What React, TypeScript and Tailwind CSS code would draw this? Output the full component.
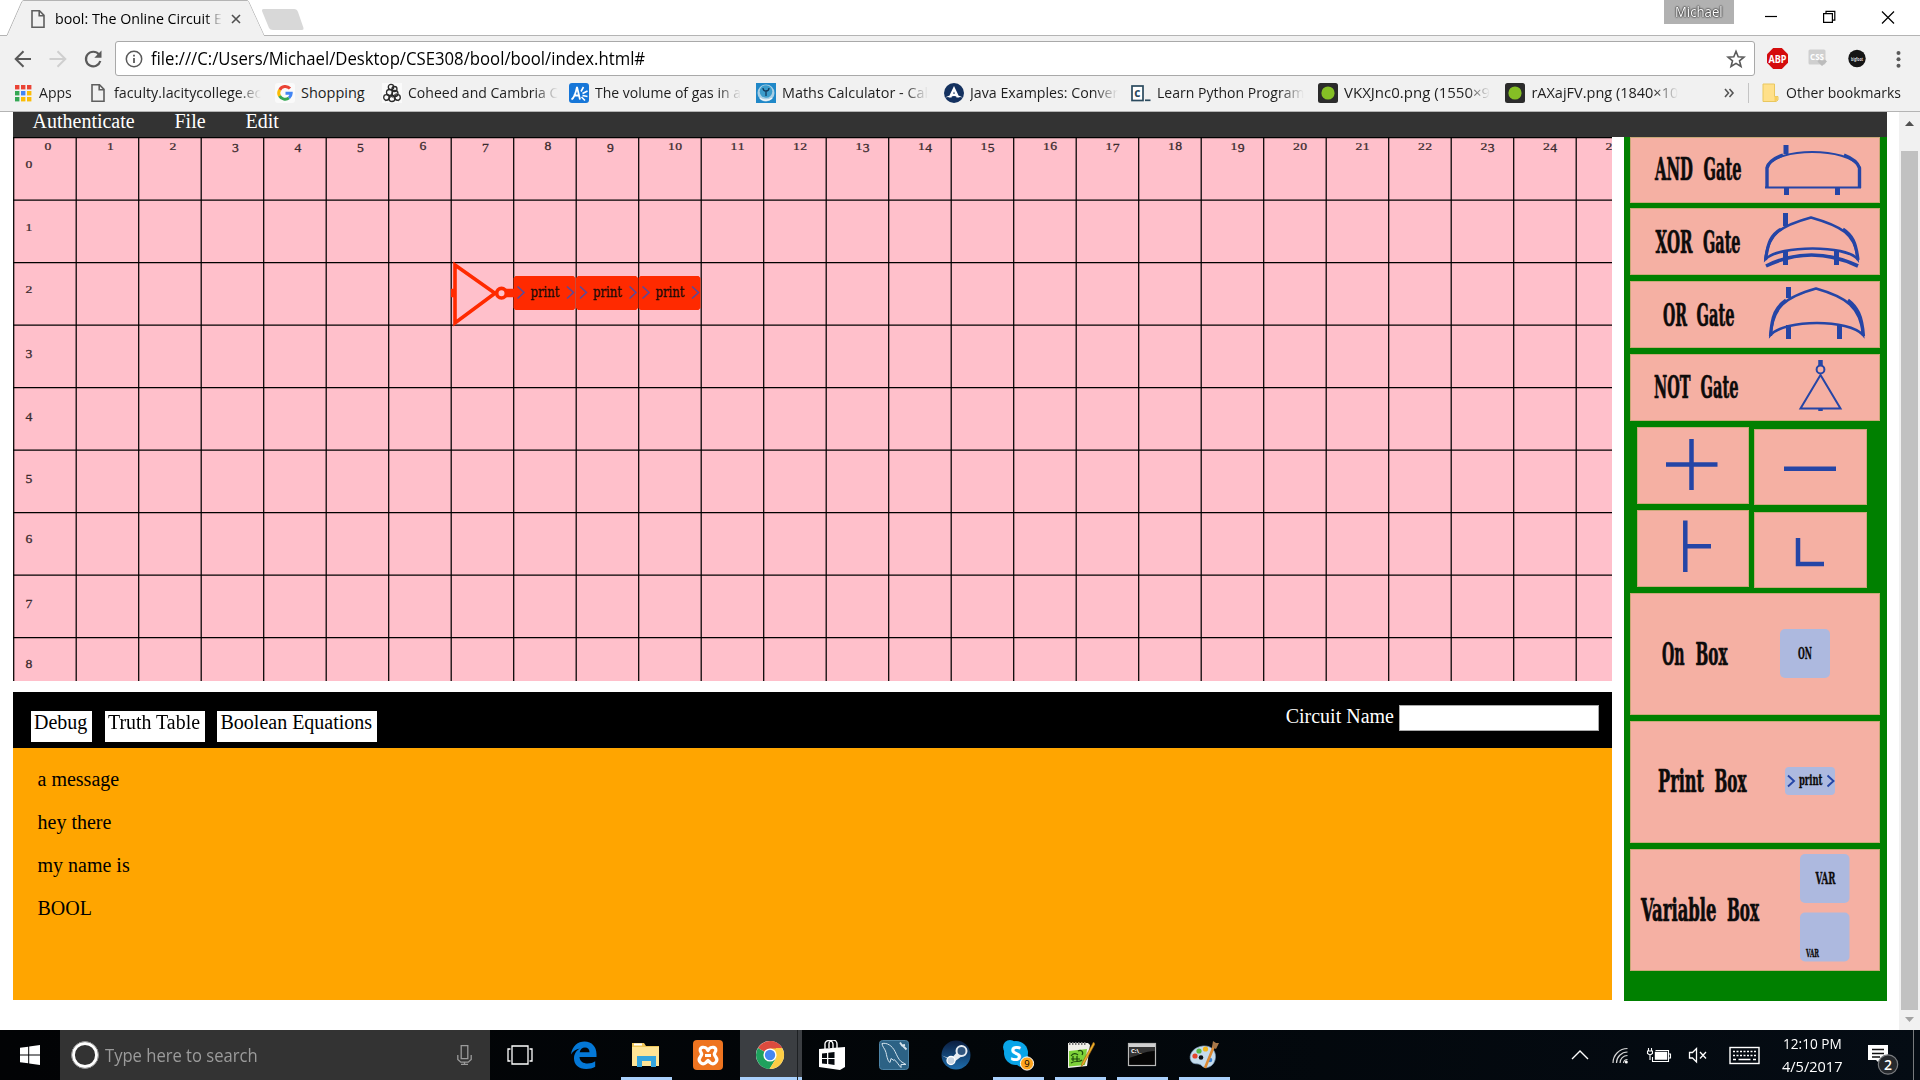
import { useLayoutEffect, useRef, useState, type ReactNode } from "react";

/* Text squeezed or stretched horizontally to an exact width. */
function Fit({ w, className = "", children }: { w: number; className?: string; children: ReactNode }) {
  const ref = useRef<HTMLSpanElement>(null);
  const [s, setS] = useState(1);
  useLayoutEffect(() => {
    if (ref.current) setS(w / ref.current.offsetWidth);
  }, [w]);
  return (
    <span className={`block shrink-0 whitespace-pre ${className}`} style={{ width: w }}>
      <span ref={ref} className="inline-block origin-left" style={{ transform: `scaleX(${s})` }}>
        {children}
      </span>
    </span>
  );
}

const PageIcon = () => (
  <svg width="20" height="20" viewBox="0 0 20 20" fill="none" stroke="#5f5f5f" strokeWidth="1.6">
    <path d="M4 1.8h7.5l4.500 4.600V18.200H4z M11.200 2v4.700h4.600" />
  </svg>
);

/* ---------- browser chrome ---------- */
function TitleBar() {
  return (
    <div className="flex h-9 items-start bg-white">
      <div className="relative h-9 w-[310px]">
        <svg className="absolute inset-0" width="310" height="36">
          <path d="M0 35.5H7L22 1.5Q23 .5 24 .5H247Q248 .5 248.500 1.500L264 35.500H310" fill="none" stroke="#b4b4b4" />
          <path d="M7.500 36L22.500 1.500Q23 1 24 1H247Q248 1 248.500 2L264 36z" fill="#f1f1f1" />
          <path d="M263.500 9H294Q297 9 298 12L303.500 28Q304 30 302 30H273Q270 30 269 28L262 11Q261.500 9 263.500 9z" fill="#d8d8d8" />
        </svg>
        <div className="relative flex h-9 items-center pl-[28px] pt-0.5">
          <PageIcon />
          <div className="ml-[7px] w-[167px] overflow-hidden text-[14.5px] [mask-image:linear-gradient(to_right,black_90%,transparent_100%)]">
            <Fit w={167}>bool: The Online Circuit E</Fit>
          </div>
          <svg className="ml-[9px]" width="10" height="10" stroke="#505050" strokeWidth="1.6">
            <path d="M1 1l8 8M9 1l-8 8" />
          </svg>
        </div>
      </div>
      <div className="flex h-9 grow justify-end border-b border-[#b4b4b4]">
        <div className="mr-[31px] flex h-6 w-[70px] items-center justify-center bg-[#b1b1b1] pb-0.5 text-[14px] text-white [text-shadow:0_0_2px_#222,0_0_1px_#222,0_0_2px_#444]">
          <Fit w={48}>Michael</Fit>
        </div>
        <svg width="155" height="34" fill="none" stroke="#000" strokeWidth="1.2">
          <path d="M0 16.500h12" />
          <path d="M58.600 13.600h8.800v8.800h-8.800zM61 13.500v-2.200h8.800v8.800h-2.300" />
          <path d="M117 11.500l12 12M129 11.500l-12 12" />
        </svg>
      </div>
    </div>
  );
}

function Toolbar() {
  return (
    <div className="flex h-10 items-start bg-[#f1f1f1] pt-[5px]">
      <svg width="115" height="35" fill="none" strokeWidth="2">
        <path d="M31 18H16M23.500 10.200L15.700 18l7.800 7.800" stroke="#5a5a5a" />
        <path d="M49.500 18H65M57.500 10.200L65.300 18l-7.800 7.800" stroke="#cfcfcf" />
        <path d="M99 13.500A7.300 7.300 0 1 0 100.300 20" stroke="#5a5a5a" strokeWidth="2.200" />
        <path d="M101.500 9.500v7.200h-7.200z" fill="#5a5a5a" />
      </svg>
      <div className="flex h-[35px] w-[1640px] items-center rounded-[3px] border border-[#a9a9a9] bg-white">
        <svg className="ml-[9px]" width="18" height="18" fill="none" stroke="#5a5a5a" strokeWidth="1.500">
          <circle cx="9" cy="9" r="7.700" />
          <path d="M9 8v5M9 4.800v1.700" strokeWidth="1.800" />
        </svg>
        <Fit w={494} className="ml-2 grow pb-px text-[17.500px] leading-[32px] text-black">
          file:///C:/Users/Michael/Desktop/CSE308/bool/bool/index.html#
        </Fit>
        <svg className="ml-auto mr-2" width="20" height="20" viewBox="0 0 20 20" fill="none" stroke="#5a5a5a" strokeWidth="1.600">
          <path d="M10 2.300l2.200 5.400 5.800.4-4.500 3.700 1.500 5.700-5-3.100-5 3.100 1.500-5.700L2 8.100l5.800-.4z" />
        </svg>
      </div>
      <svg width="160" height="35">
        <path d="M18.200 7h8.600l6.200 6.200v8.600L26.800 28h-8.600L12 21.800v-8.600z" fill="#d40c0c" />
        <text x="13.500" y="21.500" textLength="18" lengthAdjust="spacingAndGlyphs" fontSize="10.500" fontWeight="700" fill="#fff">ABP</text>
        <rect x="53.500" y="8.500" width="17" height="15" rx="1.500" fill="#cfcfcf" />
        <text x="55" y="19" textLength="14" lengthAdjust="spacingAndGlyphs" fontSize="8.500" fontWeight="700" fill="#fff">CSS</text>
        <path d="M67 25l-4.500-4.500 1.500-2 3 1.500 3-1.500 2 2z" fill="#bcbcbc" />
        <circle cx="102" cy="17.500" r="8.700" fill="#151515" />
        <text x="96" y="19.800" textLength="12" lengthAdjust="spacingAndGlyphs" fontSize="5.500" fontWeight="700" fill="#ddd">bigfoot</text>
        <g fill="#5a5a5a">
          <circle cx="143.500" cy="12" r="2" />
          <circle cx="143.500" cy="18.300" r="2" />
          <circle cx="143.500" cy="24.700" r="2" />
        </g>
      </svg>
    </div>
  );
}

const appColors = ["#ea4335", "#ea4335", "#ea4335", "#34a853", "#4285f4", "#fbbc05", "#34a853", "#fbbc05", "#fbbc05"];
const AppsIcon = () => (
  <svg width="20" height="20">
    {appColors.map((c, i) => (
      <rect key={i} x={2 + (i % 3) * 6} y={2 + Math.floor(i / 3) * 6} width="4.400" height="4.400" fill={c} />
    ))}
  </svg>
);
const GoogleIcon = () => (
  <svg width="20" height="20" fill="none" strokeWidth="3">
    <rect width="20" height="20" rx="3" fill="#fafafa" />
    <path d="M15 5.600A6.300 6.300 0 0 0 4.700 7" stroke="#ea4335" />
    <path d="M4.700 6.700A6.300 6.300 0 0 0 4.700 13.300" stroke="#fbbc05" />
    <path d="M4.600 13A6.300 6.300 0 0 0 14 14.900" stroke="#34a853" />
    <path d="M14 14.900A6.300 6.300 0 0 0 16.200 10.200H10.500" stroke="#4285f4" />
  </svg>
);
const CoheedIcon = () => (
  <svg width="20" height="20" fill="none" stroke="#2b2b2b" strokeWidth="1.300">
    <rect width="20" height="20" fill="#fafafa" stroke="none" />
    <circle cx="9" cy="4" r="2.700" />
    <circle cx="12.500" cy="6" r="2.500" />
    <circle cx="7.500" cy="9.500" r="3" />
    <circle cx="13" cy="10.500" r="3" />
    <circle cx="4.500" cy="14.500" r="2.800" />
    <circle cx="10" cy="15.500" r="3" />
    <circle cx="15.500" cy="14.500" r="2.800" />
    <path d="M3 18l12-8M17 18L5 11" strokeWidth=".7" />
  </svg>
);
const AnswersIcon = () => (
  <svg width="20" height="20">
    <rect width="20" height="20" rx="3" fill="#1676d8" />
    <path d="M2.500 16.500C5 15 7 9 8 4l3 12.500M4.500 12.500h5.500" fill="none" stroke="#fff" strokeWidth="1.800" />
    <path d="M12 8.500l2.500-4.500M13.500 10.500l5-2.500M13.500 12.500l5 1M12.500 14l3.500 3.500" stroke="#fff" strokeWidth="1.600" />
  </svg>
);
const MathsIcon = () => (
  <svg width="20" height="20">
    <rect width="20" height="20" fill="#2088c8" />
    <circle cx="10" cy="10" r="8.500" fill="#a9cfe4" />
    <circle cx="10" cy="8.500" r="6.300" fill="#3b9ccb" />
    <path d="M7 5c0 4 6 4 6 0M10 8v5" fill="none" stroke="#123a5c" strokeWidth="1.300" />
    <path d="M4 15c3 3 9 3 12 0" fill="none" stroke="#eef6fa" strokeWidth="1.500" />
  </svg>
);
const JavaIcon = () => (
  <svg width="20" height="20">
    <circle cx="10" cy="10" r="10" fill="#14315f" />
    <path d="M10 3l5.500 11.500h-3L10 8.500l-2.500 6h-3zM1 14.500l9-4 9 4-9-1.500z" fill="#fff" />
  </svg>
);
const CodeIcon = () => (
  <svg width="20" height="20">
    <rect x="1" y="3" width="11" height="14.500" fill="#fff" stroke="#2b4a5e" strokeWidth="1.700" />
    <text x="3.300" y="14" fontSize="12" fontWeight="700" fill="#2b4a5e">c</text>
    <path d="M14 17.300h5.500" stroke="#2b4a5e" strokeWidth="1.700" />
  </svg>
);
const ImgurIcon = () => (
  <svg width="20" height="20">
    <rect width="20" height="20" rx="2.500" fill="#2b2b2b" />
    <circle cx="10" cy="10" r="6.600" fill="#85bf25" />
  </svg>
);

const bookmarks: { icon: ReactNode; text: string; w: number; box: string; fade: boolean }[] = [
  { icon: <AppsIcon />, text: "Apps", w: 33, box: "w-[75px]", fade: false },
  { icon: <PageIcon />, text: "faculty.lacitycollege.ec", w: 147, box: "w-[187px]", fade: true },
  { icon: <GoogleIcon />, text: "Shopping", w: 64, box: "w-[106.500px]", fade: false },
  { icon: <CoheedIcon />, text: "Coheed and Cambria C", w: 150, box: "w-[187px]", fade: true },
  { icon: <AnswersIcon />, text: "The volume of gas in a", w: 146, box: "w-[187.500px]", fade: true },
  { icon: <MathsIcon />, text: "Maths Calculator - Cal", w: 146, box: "w-[187.500px]", fade: true },
  { icon: <JavaIcon />, text: "Java Examples: Conver", w: 148, box: "w-[187.300px]", fade: true },
  { icon: <CodeIcon />, text: "Learn Python Program", w: 147, box: "w-[187.300px]", fade: true },
  { icon: <ImgurIcon />, text: "VKXJnc0.png (1550×9", w: 146, box: "w-[187.300px]", fade: true },
  { icon: <ImgurIcon />, text: "rAXajFV.png (1840×10", w: 147, box: "w-[187.500px]", fade: true },
];

function BookmarksBar() {
  return (
    <div className="flex h-9 items-center border-b border-[#b4b4b4] bg-[#f1f1f1] pb-px pl-[13px] text-[14.500px] text-[#1e1e1e]">
      {bookmarks.map((b, i) => (
        <div key={i} className={`flex shrink-0 items-center gap-1.5 ${b.box}`}>
          {b.icon}
          <div className={b.fade ? "pb-px [mask-image:linear-gradient(to_right,black_84%,transparent_100%)]" : "pb-px"}>
            <Fit w={b.w}>{b.text}</Fit>
          </div>
        </div>
      ))}
      <svg className="ml-[31px]" width="12" height="10" fill="none" stroke="#555" strokeWidth="1.600">
        <path d="M1 1l3.500 4L1 9M5.500 1L9 5 5.500 9" />
      </svg>
      <div className="ml-3 h-5 w-px bg-[#c4c4c4]" />
      <svg className="ml-[11px]" width="20" height="20">
        <path d="M3 1h11.500v12.500H18V17l-2 1.500H3z" fill="#ffe08a" stroke="#e9c75f" />
        <path d="M14.500 13.500H17v3l-1 1.500h-1.500z" fill="#f7ce5e" />
      </svg>
      <Fit w={115} className="ml-1.5 pb-px">Other bookmarks</Fit>
    </div>
  );
}

/* ---------- circuit canvas ---------- */
const CELL = 62.5;

/* Old-style numerals: 0-2 at x-height, 3/4/5/7/9 descending. */
function GridNumber({ cx, y, n }: { cx: number; y: number; n: number }) {
  const digits = String(n).split("");
  const start = cx - (digits.length - 1) * 3.6;
  return (
    <>
      {digits.map((d, i) => {
        const low = "012".includes(d);
        const dy = "34579".includes(d) ? 2.5 : 0;
        return (
          <text key={i} textAnchor="middle" fontSize="13" transform={`translate(${start + i * 7.2} ${y + dy}) scale(1.05 ${low ? 0.74 : 1})`}>
            {d}
          </text>
        );
      })}
    </>
  );
}

function PrintBlock({ x }: { x: number }) {
  return (
    <g transform={`translate(${x} 139)`}>
      <path d="M2 0h58l2 2v30l-2 2H2l-2-2V2z" fill="#ff2a00" />
      <path d="M4 10.500l6.500 6-6.500 6M53.500 10.500l6.500 6-6.500 6" fill="none" stroke="#5a4a9a" strokeWidth="1.600" />
      <text x="17" y="20.500" textLength="29" lengthAdjust="spacingAndGlyphs" fontSize="15.500" fill="#1a0a08" stroke="#1a0a08" strokeWidth=".3">print</text>
    </g>
  );
}

function CircuitCanvas() {
  return (
    <svg width="1599" height="544" className="block bg-[#ffc0cb] [font-family:'DejaVu_Serif_Condensed','DejaVu_Serif',serif]">
      <g stroke="#000" strokeWidth="1.250">
        {Array.from({ length: 26 }, (_, i) => (
          <path key={i} d={`M${0.7 + i * CELL} 0V544`} />
        ))}
        {Array.from({ length: 9 }, (_, i) => (
          <path key={i} d={`M0 ${0.7 + i * CELL}H1599`} />
        ))}
      </g>
      <g fill="#3a2a2d" className="[font-family:'Liberation_Serif',serif]" stroke="#3a2a2d" strokeWidth=".3">
        {Array.from({ length: 26 }, (_, i) => (
          <GridNumber key={i} cx={35 + i * CELL + (i > 9 ? 2 : 0)} y={12.600} n={i} />
        ))}
        {Array.from({ length: 9 }, (_, i) => (
          <GridNumber key={i} cx={16} y={31 + i * CELL} n={i} />
        ))}
      </g>
      <g stroke="#ff2a00" fill="none" strokeWidth="3.600">
        <path d="M442 128V186L482 156.300z" />
        <circle cx="488.500" cy="156.200" r="4.800" fill="#ffc0cb" />
        <path d="M493 156H501M438 156H442" strokeWidth="8.500" />
      </g>
      <PrintBlock x={500.5} />
      <PrintBlock x={563} />
      <PrintBlock x={625.5} />
    </svg>
  );
}

/* ---------- console ---------- */
function Console() {
  return (
    <div className="mt-[11px] text-[20px] leading-[23px]">
      <div className="flex h-14 items-start bg-black pl-[18px] text-black">
        <div className="mt-[19px] h-[31px] w-[61px] bg-white pl-[3px]">Debug</div>
        <div className="ml-[13px] mt-[19px] h-[31px] w-[100px] bg-white pl-[2.500px]"><Fit w={92.5}>Truth Table</Fit></div>
        <div className="ml-3 mt-[19px] h-[31px] w-[160px] bg-white pl-[3.500px]"><Fit w={152}>Boolean Equations</Fit></div>
        <div className="ml-auto mr-[13px] mt-[13px] flex items-start">
          <span className="mr-[5px] text-white">Circuit Name</span>
          <div className="h-[26px] w-[200px] border border-[#a9a9a9] bg-white" />
        </div>
      </div>
      <div className="flex h-[252px] flex-col gap-5 bg-[#ffa500] pl-[24.500px] pt-5 text-black">
        <p>a message</p>
        <p>hey there</p>
        <p>my name is</p>
        <p>BOOL</p>
      </div>
    </div>
  );
}

/* ---------- component palette ---------- */
const BLUE = "#2545a6";
const card = "flex bg-[#f5b0a3] outline outline-1 -outline-offset-1 outline-[#c9a878]";

/* A condensed slab-serif word whose advance is scaled to w. */
function CardLabel({ x, y, w, size = 31, children }: { x: number; y: number; w: number; size?: number; children: string }) {
  const ref = useRef<SVGTextElement>(null);
  const [s, setS] = useState(0.55);
  useLayoutEffect(() => {
    if (ref.current) setS(w / ref.current.getComputedTextLength());
  }, [w]);
  return (
    <text ref={ref} transform={`translate(${x} ${y}) scale(${s} 1)`} fontSize={size} fontWeight="700" fill="#0d0b0b" stroke="#0d0b0b" strokeWidth={size > 20 ? 0.7 : 0.3}>
      {children}
    </text>
  );
}

function Palette() {
  return (
    <div className="flex h-[864px] w-[263px] flex-col bg-[#008000] px-1.5 [font-family:'DejaVu_Serif_Condensed','DejaVu_Serif',serif]">
      <div className={`${card} h-[66px] w-[250px]`}>
        <svg width="250" height="66">
          <CardLabel x={25} y={43} w={38}>AND</CardLabel>
          <CardLabel x={73.500} y={43} w={38}>Gate</CardLabel>
          <g fill="none" stroke={BLUE}>
            <path d="M137 50V30C146 10 218 10 229.500 30V50" strokeWidth="2" />
            <path d="M137 51V31Q139 23 153 18M229.500 51V31Q227 23 214 18" strokeWidth="3.400" />
            <path d="M135 50.500H231" strokeWidth="2" />
            <path d="M156 8V17M156.500 50V58M207.500 50V58" strokeWidth="5" />
          </g>
        </svg>
      </div>
      <div className={`${card} mt-[5px] h-[67px] w-[250px]`}>
        <svg width="250" height="67">
          <CardLabel x={25.500} y={45} w={37}>XOR</CardLabel>
          <CardLabel x={73} y={45} w={37.500}>Gate</CardLabel>
          <g fill="none" stroke={BLUE}>
            <path d="M135.500 51C138 26 150 18 181 9.500C211 18 226 26 227.500 51C216 37 150 37 135.500 51z" strokeWidth="2.600" />
            <path d="M135.500 52C138 34 141 27 151 21M228 52C226 34 222 27 213 21" strokeWidth="3.200" />
            <path d="M136 58Q181 36 228 58" strokeWidth="3.600" />
            <path d="M155.500 5V18M155.500 42V57M206.500 42V57" strokeWidth="5" />
          </g>
        </svg>
      </div>
      <div className={`${card} mt-1.5 h-[67px] w-[250px]`}>
        <svg width="250" height="67">
          <CardLabel x={33} y={45} w={24}>OR</CardLabel>
          <CardLabel x={66.500} y={45} w={38}>Gate</CardLabel>
          <g fill="none" stroke={BLUE}>
            <path d="M140.500 54C143 26 155 16 186 7.500C216 16 231 26 233 54C219 38 155 38 140.500 54z" strokeWidth="2.600" />
            <path d="M140.500 55C142 34 146 26 156 19M233.500 55C232 34 227 26 218 19" strokeWidth="3.200" />
            <path d="M158.500 6V17M158.500 44V58M209.500 44V58" strokeWidth="5" />
          </g>
        </svg>
      </div>
      <div className={`${card} mt-1.5 h-[67px] w-[250px]`}>
        <svg width="250" height="67">
          <CardLabel x={24} y={44} w={36.500}>NOT</CardLabel>
          <CardLabel x={70.500} y={44} w={38}>Gate</CardLabel>
          <g fill="none" stroke={BLUE} strokeWidth="2">
            <path d="M190.500 21L170.500 54.500H210.500z" />
            <circle cx="190.500" cy="15.500" r="3.900" />
            <path d="M190.500 6V11.500M190.500 54V57" strokeWidth="4.500" />
          </g>
        </svg>
      </div>
      <div className="mt-1.5 grid grid-cols-[112px_113px] gap-x-[5px] gap-y-[6px] pl-[7px]">
        <div className={`${card} h-[77px]`}>
          <svg width="112" height="77" stroke={BLUE} strokeWidth="4.500">
            <path d="M29 37.500H80.500M54.500 12V63" />
          </svg>
        </div>
        <div className={`${card} mt-0.5 h-[76px]`}>
          <svg width="113" height="76" stroke={BLUE} strokeWidth="4.500">
            <path d="M30 39.800H82" />
          </svg>
        </div>
        <div className={`${card} -mt-px h-[77px]`}>
          <svg width="112" height="77" stroke={BLUE} strokeWidth="4.500">
            <path d="M48.300 10.500V62M48 36.300H74" />
          </svg>
        </div>
        <div className={`${card} mt-px h-[76px]`}>
          <svg width="113" height="76" fill="none" stroke={BLUE} strokeWidth="4.500">
            <path d="M44 26V52H70" />
          </svg>
        </div>
      </div>
      <div className={`${card} mt-[5px] h-[122px] w-[250px]`}>
        <svg width="250" height="122">
          <CardLabel x={32} y={72} w={22.500}>On</CardLabel>
          <CardLabel x={65.500} y={72} w={32}>Box</CardLabel>
          <rect x="150" y="36" width="50" height="49" rx="5" fill="#adb9df" />
          <CardLabel x={168} y={65.500} w={14} size={16}>ON</CardLabel>
        </svg>
      </div>
      <div className={`${card} mt-1.5 h-[122px] w-[250px]`}>
        <svg width="250" height="122">
          <CardLabel x={28} y={71} w={46}>Print</CardLabel>
          <CardLabel x={84.500} y={71} w={32}>Box</CardLabel>
          <rect x="155" y="46" width="50" height="28" rx="4" fill="#adb9df" />
          <path d="M158 54.500l6 5.500-6 5.500M197.500 54.500l6 5.500-6 5.500" fill="none" stroke={BLUE} strokeWidth="1.900" />
          <CardLabel x={169} y={64} w={23.500} size={15}>print</CardLabel>
        </svg>
      </div>
      <div className={`${card} mt-1.5 h-[122px] w-[250px]`}>
        <svg width="250" height="122">
          <CardLabel x={11} y={71.500} w={75.500}>Variable</CardLabel>
          <CardLabel x={97} y={71.500} w={32}>Box</CardLabel>
          <rect x="170" y="5" width="49.500" height="49" rx="5" fill="#adb9df" />
          <CardLabel x={185.500} y={35} w={20} size={16}>VAR</CardLabel>
          <rect x="170" y="63.500" width="49.500" height="49" rx="5" fill="#adb9df" />
          <CardLabel x={176} y={108} w={13} size={11}>VAR</CardLabel>
        </svg>
      </div>
    </div>
  );
}

/* ---------- taskbar ---------- */
function ExplorerIcon() {
  return (
    <svg width="30" height="30">
      <path d="M1 3h12l2 3h13v20H1z" fill="#f0c75a" />
      <path d="M1 7h27v19H1z" fill="#ffe596" />
      <path d="M3 3.500h8v2H3z" fill="#fff" />
      <path d="M6 26V16h19v11h-5v-6h-9v6H6z" fill="#35a6de" />
    </svg>
  );
}
function XamppIcon() {
  return (
    <svg width="30" height="30">
      <rect width="30" height="30" rx="4" fill="#ee7420" />
      <path d="M15 10.500C12.500 5 4.500 7 8 12.500Q9.500 14.500 7.500 16.500C4 21 9 26 13 22.500L15 20.500L17 22.500C21 26 26 21 22.500 16.500Q20.500 14.500 22 12.500C25.500 7 17.500 5 15 10.500z" fill="none" stroke="#fff" strokeWidth="3.200" strokeLinejoin="round" />
      <path d="M12 15.500h6" stroke="#fff" strokeWidth="3" />
    </svg>
  );
}
function ChromeIcon() {
  return (
    <svg width="30" height="30">
      <circle cx="15" cy="15" r="14" fill="#fff" />
      <path d="M15 15L2.900 8A14 14 0 0 1 27.100 8z" fill="#dd4b3e" />
      <path d="M15 1A14 14 0 0 1 27.100 8H15z" fill="#dd4b3e" />
      <path d="M2.900 8A14 14 0 0 0 14.500 29L21 18.500 15 15z" fill="#1fa15d" />
      <path d="M27.100 8A14 14 0 0 1 14.500 29L21 18.500V8z" fill="#fdcd45" />
      <path d="M15 8.500H27.300L21 15z" fill="#fdcd45" />
      <circle cx="15" cy="15" r="6.600" fill="#fff" />
      <circle cx="15" cy="15" r="5.200" fill="#4586f3" />
    </svg>
  );
}
function StoreIcon() {
  return (
    <svg width="30" height="30">
      <path d="M2 9l26-2v20l-5 3L2 27z" fill="#fff" />
      <path d="M8 9V5a4 4 0 0 1 8-1v4M12 8V4a4 4 0 0 1 8 0v4" fill="none" stroke="#fff" strokeWidth="1.400" />
      <path d="M5 13.500l5-.6v5H5zM11.300 12.700l6.200-.7v5.900h-6.200zM5 19h5v5l-5-.6zM11.300 19h6.200v5.900l-6.200-.8z" fill="#05090e" />
    </svg>
  );
}
function MysqlIcon() {
  return (
    <svg width="30" height="30" fill="none" stroke="#d5e4ee">
      <rect x=".5" y=".5" width="29" height="29" rx="3" fill="#2c6285" stroke="#4c83a6" />
      <path d="M3 3.500c5-1 10 2 13 8 2 4 3 7 6 10l5 3-5 0 0 3c-3-3-4-6-7-8M3 3.500c0 3 3 5 4 9 1 5 2 9 4 10l1-4 3 2" strokeWidth="1" />
      <path d="M21 2.500l2 3 3-.5M23.500 5.500l4 4" strokeWidth="1.800" />
    </svg>
  );
}
function SteamIcon() {
  return (
    <svg width="30" height="30">
      <defs>
        <linearGradient id="steam" x1="0" y1="0" x2="0" y2="1">
          <stop offset="0" stopColor="#0b1d3f" />
          <stop offset="1" stopColor="#1d6cab" />
        </linearGradient>
      </defs>
      <circle cx="15" cy="15" r="14.500" fill="url(#steam)" />
      <path d="M1 15.500l9 3.500 7-8 4 5-8 6z" fill="#e6ecf2" />
      <circle cx="20.500" cy="11" r="5" fill="#31567f" stroke="#e6ecf2" strokeWidth="2" />
      <circle cx="10" cy="20.500" r="4" fill="#c7d5e2" stroke="#fff" strokeWidth="1.300" />
    </svg>
  );
}
function SkypeIcon() {
  return (
    <svg width="38" height="32">
      <circle cx="17" cy="14" r="12" fill="#0aa5e8" />
      <circle cx="11" cy="8" r="7" fill="#0aa5e8" />
      <circle cx="23" cy="21" r="7" fill="#0aa5e8" />
      <text x="11" y="21.500" fontSize="21" fontWeight="700" fill="#fff">S</text>
      <circle cx="28" cy="24.500" r="6.600" fill="#ffa51f" stroke="#fff" strokeWidth="1" />
      <text x="25.300" y="28" fontSize="9.500" fill="#000">9</text>
    </svg>
  );
}
function NotepadIcon() {
  return (
    <svg width="30" height="30">
      <path d="M3 3h20l2 2-3 21-19 2z" fill="#f1f1ea" />
      <path d="M4 3.500h18" stroke="#777" strokeWidth="3" strokeDasharray="1.500 1.500" />
      <path d="M4 11l18-2-2 16-16 1.500z" fill="#7ed23a" />
      <path d="M6 16c2-3 5-3 7-1M13 11c3-2 6 1 4 4M6 19h9M8 16v5M12 16v6M6 23c4-3 8 0 11-3" fill="none" stroke="#1d4a0a" strokeWidth="1.200" />
      <path d="M28.500 2L17 23l-1 4 3-3L30 4z" fill="#eeae28" stroke="#8c5a16" strokeWidth=".6" />
    </svg>
  );
}
function CmdIcon() {
  return (
    <svg width="30" height="30">
      <rect x="1.500" y="3.500" width="27" height="22" fill="#050505" stroke="#b9b9b9" strokeWidth="1.200" />
      <path d="M2 4h26v3H2z" fill="#d0d0d0" />
      <path d="M2 7h26v4C17 11 13 15 2 18z" fill="#343434" />
      <text x="4" y="13" fontSize="6" fontWeight="700" fill="#fff">C:\_</text>
    </svg>
  );
}
function PaintIcon() {
  return (
    <svg width="32" height="30">
      <path d="M15 6C5 7 0 15 3 21c2 4 7 2 10 4 3 4 9 3 12-1 5-6 3-19-10-18z" fill="#c5dcee" stroke="#7c9cbb" strokeWidth=".7" />
      <circle cx="7" cy="16" r="2.600" fill="#e3452d" />
      <circle cx="11" cy="11" r="2.600" fill="#58b947" />
      <circle cx="17.500" cy="9" r="2.600" fill="#f2b61e" />
      <circle cx="13" cy="17.500" r="2.300" fill="#0a1016" />
      <circle cx="22" cy="20" r="2.300" fill="#3e83d4" />
      <path d="M26 6L17 28" stroke="#dd8a34" strokeWidth="2.600" />
      <path d="M24 7l1-6 3 2 3 0-3 6z" fill="#a8784a" />
    </svg>
  );
}
function EdgeIcon() {
  return (
    <svg width="30" height="30" viewBox="0 0 30 30">
      <path d="M2 14.500C3 6 9 1.500 15.500 1.500 23 1.500 27.500 7 27.500 14v3H10.500c.3 4.500 4 6.500 8 6.500 3 0 5.500-.8 7.700-2.200v5.500c-2.500 1.400-5.600 2.200-9 2.200C9.500 29 5 24.500 5 18.500c0-4.500 2.300-8 6-10C7 9 3.800 11.500 2 14.500zM10.700 12.200H20.500c0-3-1.700-4.700-4.500-4.700s-4.700 1.700-5.300 4.700z" fill="#0478d7" />
    </svg>
  );
}

const apps: { icon: ReactNode; running?: boolean; active?: boolean }[] = [
  { icon: <EdgeIcon /> },
  { icon: <ExplorerIcon />, running: true },
  { icon: <XamppIcon /> },
  { icon: <ChromeIcon />, active: true },
  { icon: <StoreIcon /> },
  { icon: <MysqlIcon /> },
  { icon: <SteamIcon /> },
  { icon: <SkypeIcon />, running: true },
  { icon: <NotepadIcon />, running: true },
  { icon: <CmdIcon />, running: true },
  { icon: <PaintIcon />, running: true },
];

function Taskbar() {
  return (
    <div className="flex h-[50px] bg-[#02060a] bg-linear-to-r from-[#020305] via-[#020609] to-[#050c14] text-white">
      <div className="flex w-[60px] shrink-0 items-center justify-center">
        <svg width="20" height="20" fill="#fff">
          <path d="M0 2.800l8.200-1.100v7.800H0zM9.200 1.500L20 0v9.500H9.200zM0 10.500h8.200v7.800L0 17.200zM9.200 10.500H20V20L9.200 18.500z" />
        </svg>
      </div>
      <div className="flex w-[430px] shrink-0 items-center bg-[#333333] pl-[11px]">
        <svg width="28" height="28" fill="none">
          <circle cx="14" cy="14" r="11.800" stroke="#fff" strokeWidth="3.400" />
          <circle cx="14" cy="14" r="13.400" stroke="#8d8d8d" strokeWidth="1" />
        </svg>
        <Fit w={153} className="ml-1.5 text-[18px] leading-[24px] text-[#9b9b9b]">Type here to search</Fit>
        <svg className="ml-auto mr-[18px]" width="15" height="20" fill="none" stroke="#9b9b9b" strokeWidth="1.300">
          <path d="M4.200.700h6.600v13H4.200zM.8 10v4.500l3 2.700h7.400l3-2.700V10M7.500 17v2.500M4 19.300h7" />
        </svg>
      </div>
      <div className="flex w-[63.500px] shrink-0 items-center pl-[17px]">
        <svg width="26" height="20" fill="none" stroke="#fff" strokeWidth="1.300">
          <path d="M5 1h16v18H5zM3.500 4H1v12h2.500M22.500 4H25v12h-2.500" />
        </svg>
      </div>
      {apps.map((a, i) => (
        <div key={i} className={`relative flex w-[62px] shrink-0 items-center justify-center pr-[1.500px] ${a.active ? "bg-[#3b3e42]" : ""}`}>
          {a.icon}
          {a.running && <div className="absolute bottom-0 left-[5.500px] h-[3px] w-[51px] bg-[#a9d0fb]" />}
          {a.active && <div className="absolute bottom-0 left-0 h-[3px] w-full bg-[#a9d0fb]" />}
          {a.active && <div className="absolute right-[4px] top-0 h-[50px] w-px bg-[#1d2023]" />}
        </div>
      ))}
      <svg className="ml-auto" width="200" height="50" fill="none" stroke="#fff" strokeWidth="1.400">
        <path d="M8 29l8-8 8 8" />
        <path d="M49 33A14.500 14.500 0 0 1 63.500 18.500M52.500 33A11 11 0 0 1 63.500 22M56 33A7.500 7.500 0 0 1 63.500 25.500M59.500 33A4 4 0 0 1 63.500 29.500" strokeWidth="1.200" stroke="#d6d6d6" />
        <circle cx="62.300" cy="32" r="1.500" fill="#fff" stroke="none" />
        <path d="M91.500 22.500h11v6.500h-11z" fill="#fff" />
        <path d="M88.500 27v4.500H104.500V20.500H91.500M105 24h1.500v4H105M87.500 18v3M84.500 18v3M83.500 21h5v2.500l-2.500 1.500-2.500-1.500zM86 25v5" strokeWidth="1.100" />
        <path d="M125.500 22.500h3l4-4v13.500l-4-4h-3zM136 22l6 6.500M142 22l-6 6.500" strokeWidth="1.300" />
        <rect x="166" y="17.500" width="29" height="16" />
        <path d="M169 21.500h23M169 25.500h23" strokeDasharray="2 1.500" />
        <path d="M169 29.500h3M174.500 29.500h12M189 29.500h3" />
      </svg>
      <div className="ml-4 flex w-[64px] shrink-0 flex-col items-center text-[15px] leading-[23px]">
        <Fit w={59} className="pt-0.5">12:10 PM</Fit>
        <Fit w={60}>4/5/2017</Fit>
      </div>
      <svg className="ml-[21px]" width="50" height="50">
        <path d="M3 15h20v15H15v4l-4-4H3z" fill="#fff" />
        <path d="M7 19.500h12M7 23.500h12M7 27h8" stroke="#111" strokeWidth="1.300" />
        <circle cx="23" cy="34.500" r="9.700" fill="#26292d" stroke="#7b7d80" strokeWidth="1.200" />
        <text x="19" y="39.800" fontSize="14" fontWeight="600" fill="#fff">2</text>
        <path d="M48.500 0v50" stroke="#777a7d" />
      </svg>
      <div className="w-[5px] shrink-0" />
    </div>
  );
}

export default function App() {
  return (
    <div className="flex h-[1080px] w-[1920px] flex-col overflow-hidden bg-white [font-family:'Open_Sans','Noto_Sans',sans-serif]">
      <TitleBar />
      <Toolbar />
      <BookmarksBar />
      <div className="flex h-[918px] bg-white">
        <div className="ml-[13px] w-[1874px] [font-family:'Liberation_Serif',serif]">
          <div className="flex h-[25px] bg-[#333333] pl-[19.500px] text-[20px] leading-[19px] text-white">
            <span className="w-[142px]">Authenticate</span>
            <span className="w-[71px]">File</span>
            <span>Edit</span>
          </div>
          <div className="flex justify-between">
            <div className="w-[1599px]">
              <CircuitCanvas />
              <Console />
            </div>
            <Palette />
          </div>
        </div>
        <div className="ml-auto flex w-[21px] flex-col items-center bg-[#f1f1f1]">
          <svg width="21" height="39">
            <path d="M6 14l4.500-5 4.500 5z" fill="#505050" />
          </svg>
          <div className="h-[859px] w-[17px] bg-[#c1c1c1]" />
          <svg width="21" height="20">
            <path d="M6 7l4.500 5 4.500-5z" fill="#a3a3a3" />
          </svg>
        </div>
      </div>
      <Taskbar />
    </div>
  );
}
